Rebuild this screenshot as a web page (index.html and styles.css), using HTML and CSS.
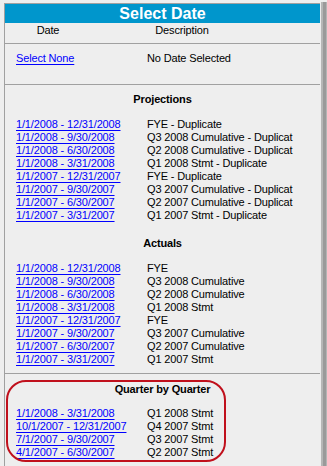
FILE: index.html
```html
<!DOCTYPE html>
<html>
<head>
<meta charset="utf-8">
<link rel="stylesheet" href="styles.css">
</head>
<body>
<div class="page">
  <div class="panel">
    <div class="title">Select Date</div>
    <div class="colhead">
      <div class="ch-date">Date</div>
      <div class="ch-desc">Description</div>
    </div>
    <div class="none-sec">
      <div class="row"><a class="link" href="#">Select None</a><span class="desc">No Date Selected</span></div>
    </div>
    <div class="sec">
      <div class="heading">Projections</div>
      <div class="rows">
        <div class="row"><a class="link" href="#">1/1/2008 - 12/31/2008</a><span class="desc">FYE - Duplicate</span></div>
        <div class="row"><a class="link" href="#">1/1/2008 - 9/30/2008</a><span class="desc">Q3 2008 Cumulative - Duplicat</span></div>
        <div class="row"><a class="link" href="#">1/1/2008 - 6/30/2008</a><span class="desc">Q2 2008 Cumulative - Duplicat</span></div>
        <div class="row"><a class="link" href="#">1/1/2008 - 3/31/2008</a><span class="desc">Q1 2008 Stmt - Duplicate</span></div>
        <div class="row"><a class="link" href="#">1/1/2007 - 12/31/2007</a><span class="desc">FYE - Duplicate</span></div>
        <div class="row"><a class="link" href="#">1/1/2007 - 9/30/2007</a><span class="desc">Q3 2007 Cumulative - Duplicat</span></div>
        <div class="row"><a class="link" href="#">1/1/2007 - 6/30/2007</a><span class="desc">Q2 2007 Cumulative - Duplicat</span></div>
        <div class="row"><a class="link" href="#">1/1/2007 - 3/31/2007</a><span class="desc">Q1 2007 Stmt - Duplicate</span></div>
      </div>
      <div class="heading heading-next">Actuals</div>
      <div class="rows">
        <div class="row"><a class="link" href="#">1/1/2008 - 12/31/2008</a><span class="desc">FYE</span></div>
        <div class="row"><a class="link" href="#">1/1/2008 - 9/30/2008</a><span class="desc">Q3 2008 Cumulative</span></div>
        <div class="row"><a class="link" href="#">1/1/2008 - 6/30/2008</a><span class="desc">Q2 2008 Cumulative</span></div>
        <div class="row"><a class="link" href="#">1/1/2008 - 3/31/2008</a><span class="desc">Q1 2008 Stmt</span></div>
        <div class="row"><a class="link" href="#">1/1/2007 - 12/31/2007</a><span class="desc">FYE</span></div>
        <div class="row"><a class="link" href="#">1/1/2007 - 9/30/2007</a><span class="desc">Q3 2007 Cumulative</span></div>
        <div class="row"><a class="link" href="#">1/1/2007 - 6/30/2007</a><span class="desc">Q2 2007 Cumulative</span></div>
        <div class="row"><a class="link" href="#">1/1/2007 - 3/31/2007</a><span class="desc">Q1 2007 Stmt</span></div>
      </div>
    </div>
    <div class="qsec">
      <div class="ring"></div>
      <div class="heading">Quarter by Quarter</div>
      <div class="rows">
        <div class="row"><a class="link" href="#">1/1/2008 - 3/31/2008</a><span class="desc">Q1 2008 Stmt</span></div>
        <div class="row"><a class="link" href="#">10/1/2007 - 12/31/2007</a><span class="desc">Q4 2007 Stmt</span></div>
        <div class="row"><a class="link" href="#">7/1/2007 - 9/30/2007</a><span class="desc">Q3 2007 Stmt</span></div>
        <div class="row"><a class="link" href="#">4/1/2007 - 6/30/2007</a><span class="desc">Q2 2007 Stmt</span></div>
      </div>
    </div>
  </div>
  <div class="edge"></div>
</div>
</body>
</html>
```
FILE: styles.css
```css
html, body {
  margin: 0;
  padding: 0;
  background: #eeeeee;
}
body {
  font-family: "Liberation Sans", Arial, sans-serif;
  font-size: 11px;
  letter-spacing: -0.15px;
  line-height: 13px;
  color: #000;
  overflow: hidden;
  height: 466px;
}
.page {
  display: flex;
  align-items: stretch;
  height: 466px;
}
.panel {
  margin-left: 4px;
  margin-top: 3px;
  width: 315px;
  border-left: 1px solid #a0a0a0;
  border-top: 1px solid #a0a0a0;
  background: #eeeeee;
}
.edge {
  margin-top: 2px;
  width: 7px;
  background: linear-gradient(to right, #ececec 0, #ececec 1px, #b6b6b6 1px, #b6b6b6 3px, #9a9a9a 3px, #9a9a9a 6px, #b4b4b4 6px);
}
.title {
  height: 19px;
  line-height: 19px;
  background: #0096cc;
  color: #fff;
  font-weight: bold;
  font-size: 16px;
  letter-spacing: 0;
  text-align: center;
}
.colhead {
  display: grid;
  grid-template-columns: 86px 182px;
  padding: 1px 0 6px;
  border-bottom: 1px solid #a0a0a0;
  text-align: center;
}
.none-sec {
  padding: 8px 0 19px;
  border-bottom: 1px solid #a0a0a0;
}
.sec {
  padding: 8px 0 7px;
  border-bottom: 1px solid #a0a0a0;
}
.heading {
  font-weight: bold;
  text-align: center;
}
.heading-next {
  margin-top: 15px;
}
.rows {
  margin-top: 12px;
}
.row {
  display: grid;
  grid-template-columns: 131px 1fr;
  padding-left: 11px;
  white-space: nowrap;
}
.link {
  color: #0000ff;
  text-decoration: underline;
  text-underline-offset: 2px;
  justify-self: start;
}
.desc {
  overflow: hidden;
}
.qsec {
  position: relative;
  padding-top: 9px;
}
.qsec .rows {
  margin-top: 11px;
}
.ring {
  position: absolute;
  left: 1px;
  top: 6px;
  width: 216px;
  height: 78px;
  border: 2px solid #c0101c;
  border-radius: 20px;
}
```
